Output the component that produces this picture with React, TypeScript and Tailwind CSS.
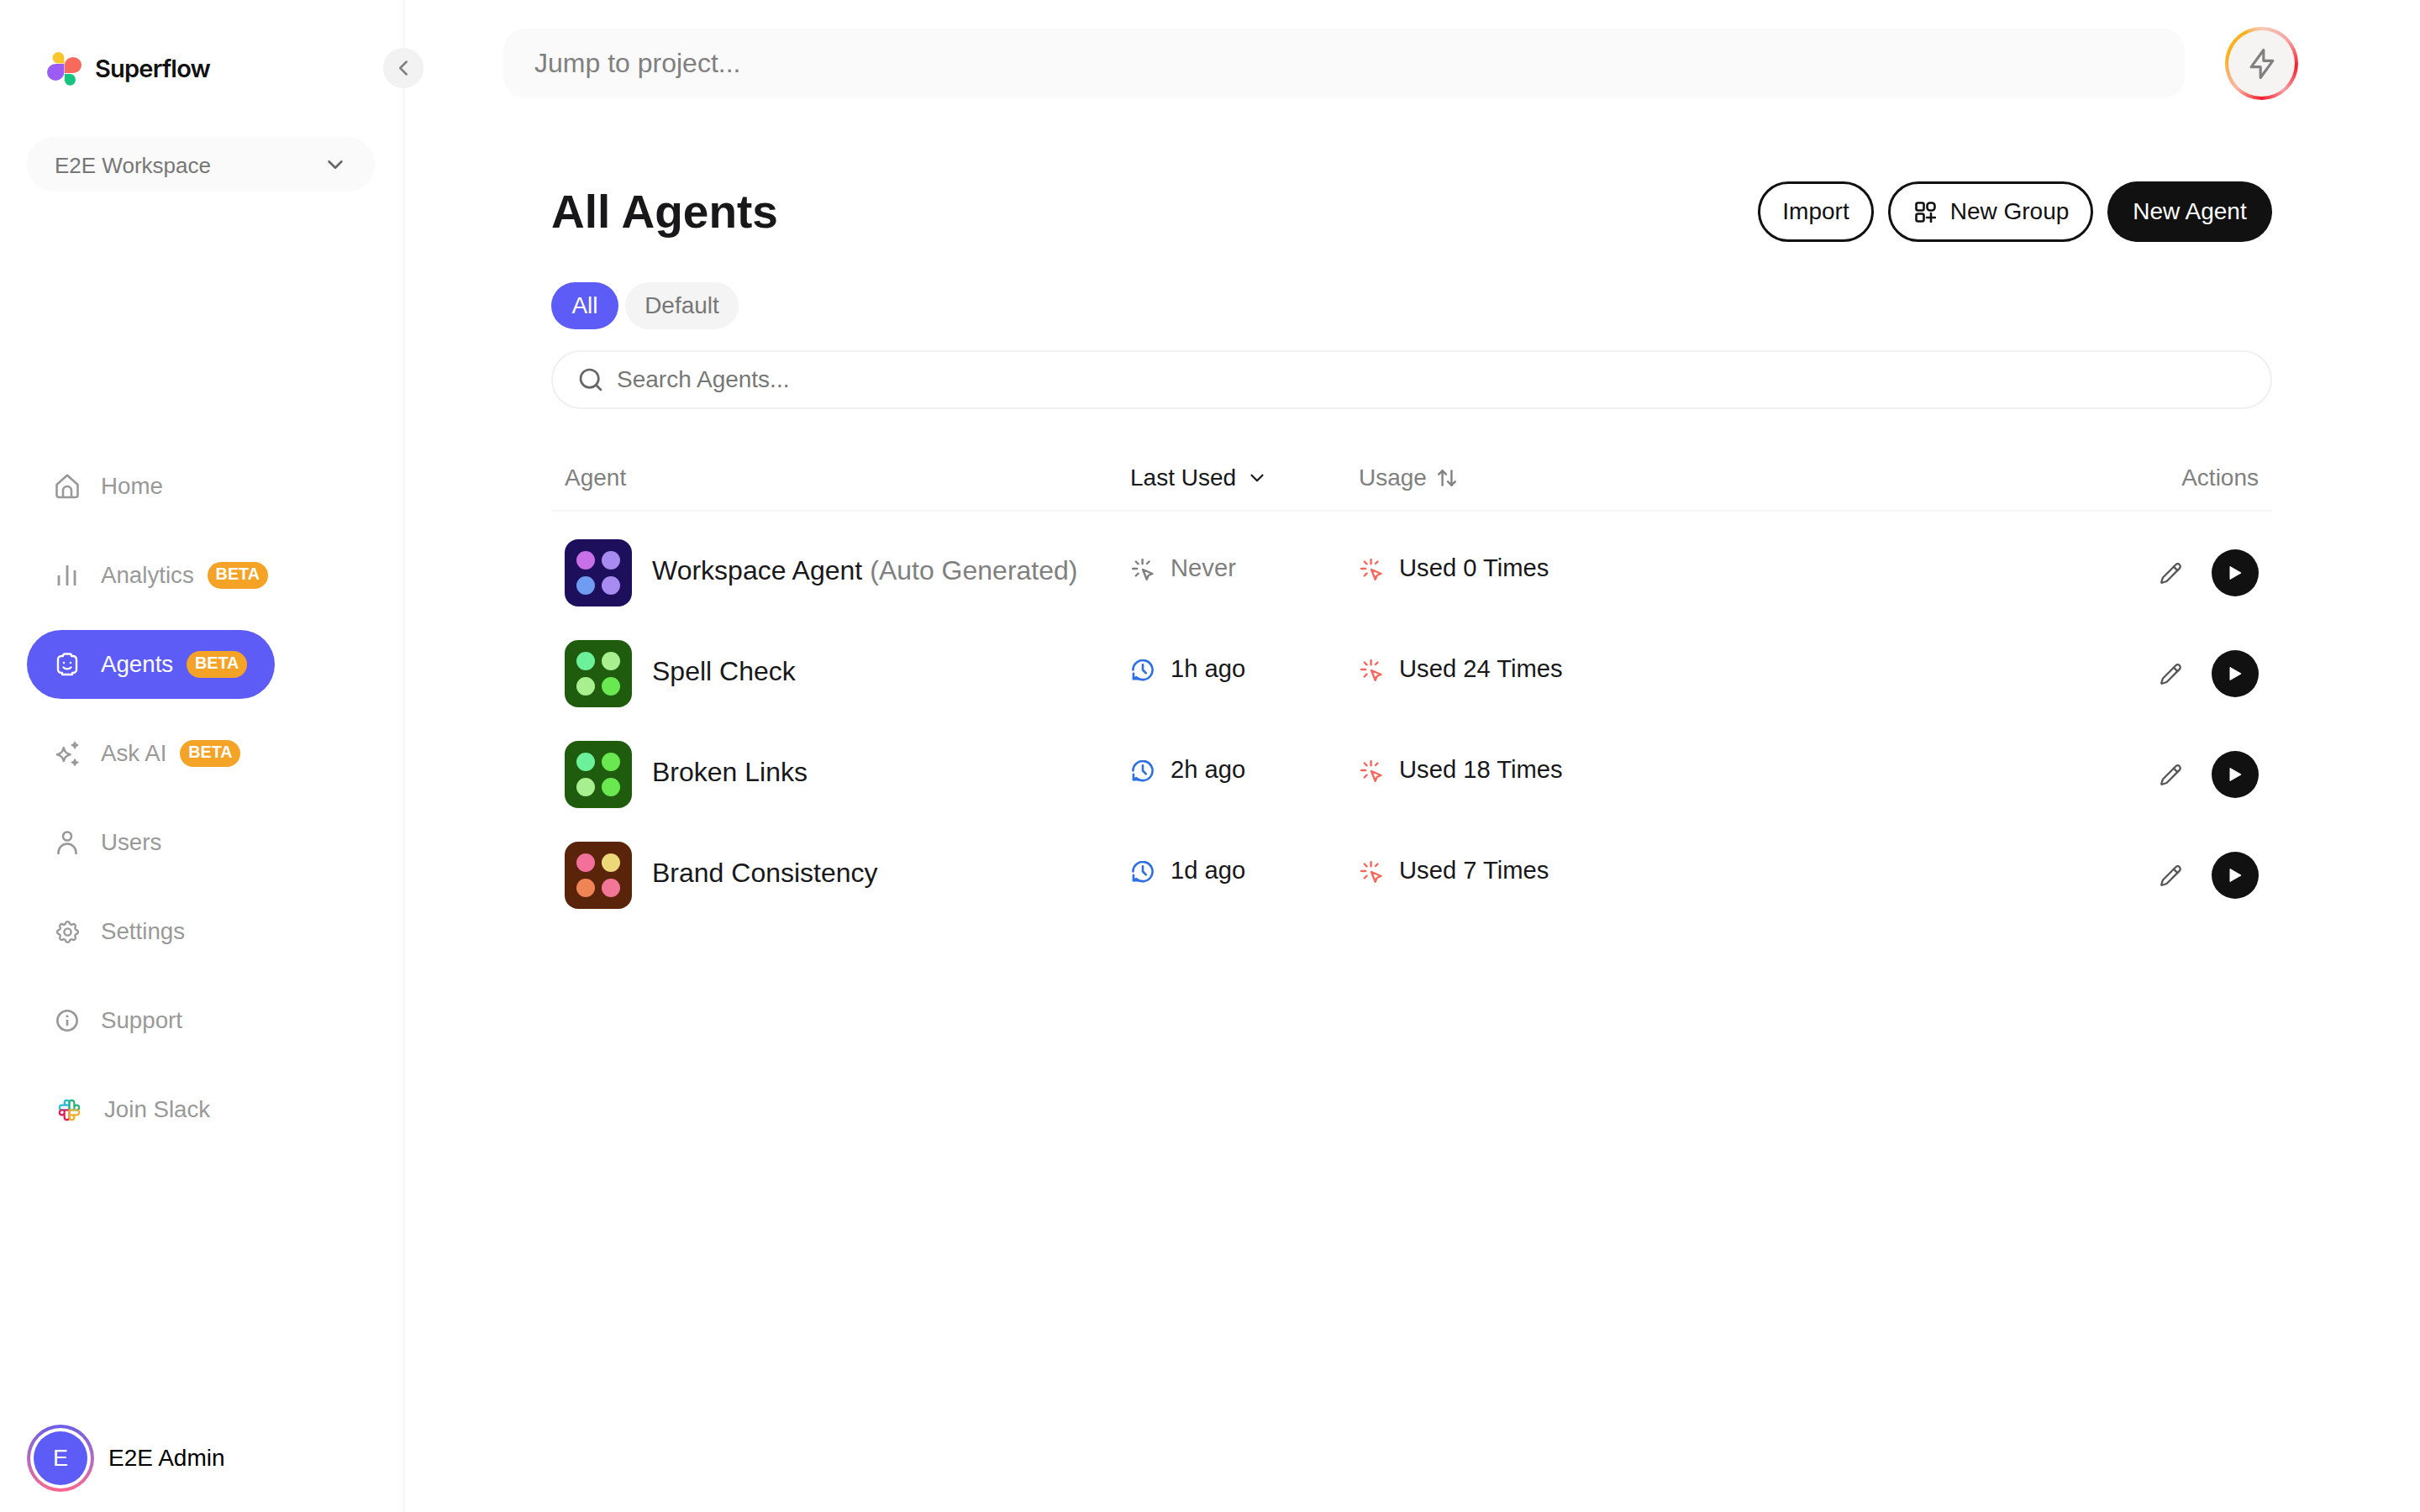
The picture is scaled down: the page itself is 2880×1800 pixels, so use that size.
import { ArrowUpDown, ChevronDown, ChevronLeft, Pencil, Search } from 'lucide-react';
import { TbSettings } from 'react-icons/tb';
import type { ReactNode } from 'react';

function Logo() {
  return (
    <svg width="41" height="40" viewBox="0 0 41 40" aria-hidden="true">
      <path d="M20.4 13.4H13.45A6.95 6.7 0 1 1 20.4 6.7Z" fill="#fbc52d" />
      <path d="M20.8 25V15.5A10.1 9.5 0 1 1 30.9 25Z" fill="#f96a5d" />
      <path d="M20.4 14V24A10.2 10 0 1 1 10.2 14Z" fill="#9b5cf6" />
      <path d="M20.8 26H27.4A6.6 6.85 0 1 1 20.8 32.85Z" fill="#16c47f" />
    </svg>
  );
}

function HomeIcon() {
  return (
    <svg width="28" height="30" viewBox="0 0 28 30" fill="none" stroke="currentColor" strokeWidth="2.6" strokeLinejoin="round" aria-hidden="true">
      <path d="M1.5 13 14 1.8 26.500 13v12.500a2.500 2.500 0 0 1-2.500 2.500H4a2.500 2.500 0 0 1-2.500-2.500Z" />
      <path d="M9 28v-8a5 5 0 0 1 10 0v8" />
    </svg>
  );
}

function BarsIcon() {
  return (
    <svg width="28" height="26" viewBox="0 0 28 26" fill="none" stroke="currentColor" strokeWidth="2.8" aria-hidden="true">
      <path d="M4 13v12M14 1v24M23 7v18" />
    </svg>
  );
}

function BotIcon() {
  return (
    <svg width="28" height="28" viewBox="0 0 28 28" fill="none" stroke="currentColor" strokeWidth="2.4" strokeLinecap="round" strokeLinejoin="round" aria-hidden="true">
      <path d="M9 4V3.500A2 2 0 0 1 11 1.500h6a2 2 0 0 1 2 2V4h1.500A4 4 0 0 1 25 8v12a4 4 0 0 1-4 4h-1v2h-12v-2H7a4 4 0 0 1-4-4V8a4 4 0 0 1 4-4Z" />
      <path d="M9.500 17.500c2.500 2.500 6.500 2.500 9 0" />
      <circle cx="10" cy="12" r="1.200" fill="currentColor" stroke="none" />
      <circle cx="18" cy="12" r="1.200" fill="currentColor" stroke="none" />
    </svg>
  );
}

function SparkIcon() {
  return (
    <svg width="28" height="30" viewBox="3 0 23 25" aria-hidden="true">
      <path d="M11 7c1 4 2.500 5.500 6.500 6.500-4 1-5.500 2.500-6.500 6.500-1-4-2.500-5.500-6.500-6.500C8.500 12.500 10 11 11 7Z" fill="none" stroke="currentColor" strokeWidth="2.200" strokeLinejoin="round" />
      <path d="M22 1c.5 2 1.300 2.800 3.300 3.300-2 .5-2.800 1.300-3.300 3.300-.5-2-1.300-2.800-3.300-3.300 2-.5 2.800-1.300 3.300-3.300Z" fill="currentColor" stroke="currentColor" strokeWidth="1" strokeLinejoin="round" />
      <path d="M22 18c.5 2 1.300 2.800 3.300 3.300-2 .5-2.800 1.300-3.300 3.300-.5-2-1.300-2.800-3.300-3.300 2-.5 2.800-1.300 3.300-3.300Z" fill="currentColor" stroke="currentColor" strokeWidth="1" strokeLinejoin="round" />
    </svg>
  );
}

function PersonIcon() {
  return (
    <svg width="28" height="28" viewBox="0 0 28 28" fill="none" stroke="currentColor" strokeWidth="2.600" aria-hidden="true">
      <circle cx="14" cy="6.500" r="5" />
      <path d="M3.500 28v-2a10.500 10.500 0 0 1 21 0v2" />
    </svg>
  );
}

function InfoIcon() {
  return (
    <svg width="28" height="28" viewBox="0 0 28 28" fill="none" stroke="currentColor" strokeWidth="2.600" aria-hidden="true">
      <circle cx="14" cy="14" r="11.700" />
      <path d="M14 13v7" />
      <circle cx="14" cy="8.800" r="1.600" fill="currentColor" stroke="none" />
    </svg>
  );
}

function SlackIcon() {
  return (
    <svg width="35" height="35" viewBox="0 0 24 24" fill="none" strokeWidth="1.500" strokeLinecap="round" strokeLinejoin="round" className="shrink-0" aria-hidden="true">
      <path d="M12 12h-6a2 2 0 0 1 0 -4h6m-2 0a2 2 0 1 1 2 -2v6" stroke="#2fb9d6" />
      <path d="M12 12v-6a2 2 0 0 1 4 0v6m0 -2a2 2 0 1 1 2 2h-6" stroke="#2bb57a" />
      <path d="M12 12v6a2 2 0 0 1 -4 0v-6m0 2a2 2 0 1 1 -2 -2h6" stroke="#dd1f5a" />
      <path d="M12 12h6a2 2 0 0 1 0 4h-6m2 0a2 2 0 1 1 -2 2v-6" stroke="#efb02e" />
    </svg>
  );
}

function GroupIcon() {
  return (
    <svg width="25" height="25" viewBox="0 0 25 25" fill="none" stroke="#111" strokeWidth="2.600" strokeLinecap="round" aria-hidden="true">
      <rect x="1.500" y="1.500" width="9" height="9" rx="2" />
      <rect x="14.500" y="1.500" width="9" height="9" rx="3.500" />
      <rect x="1.500" y="14.500" width="9" height="9" rx="2" />
      <path d="M19 14v10M14 19h10" />
    </svg>
  );
}

function BoltIcon() {
  return (
    <svg width="44" height="44" viewBox="0 0 24 24" fill="none" stroke="#808080" strokeWidth="1.700" strokeLinecap="round" strokeLinejoin="round" aria-hidden="true">
      <path d="M13 3v7h6l-8 11v-7h-6l8 -11" />
    </svg>
  );
}

function ClickIcon({ color }: { color: string }) {
  return (
    <svg width="26" height="26" viewBox="0 0 26 26" fill="none" stroke={color} strokeWidth="2.400" strokeLinecap="round" strokeLinejoin="round" aria-hidden="true">
      <path d="M12.600 1v5.200M4.800 3.500l2.800 2.800M20.500 3.500l-2.500 2.500M1 12h5.200M4.800 20.500l2.800-2.800" />
      <path d="M13 13l11.500 5-4.800 2-2 4.800Z" />
    </svg>
  );
}

function HistoryIcon() {
  return (
    <svg width="26" height="26" viewBox="0 0 27 27" fill="none" stroke="#2f6fe4" strokeWidth="2.700" strokeLinecap="round" strokeLinejoin="round" aria-hidden="true">
      <path d="M1.500 13a12 12 0 1 1 4 9L2 24" />
      <path d="M2 17.500V24h6.500" />
      <path d="M13.500 6.500V13l4 4" />
    </svg>
  );
}

type NavProps = {
  icon: ReactNode;
  label: string;
  beta?: boolean;
  active?: boolean;
  slack?: boolean;
};

function NavItem({ icon, label, beta, active, slack }: NavProps) {
  return (
    <div
      className={`flex h-[82px] w-fit items-center rounded-full pr-[33px] ${slack ? 'pl-[36px]' : 'pl-[34px]'} ${
        active ? 'bg-[#5e5cf6] text-white' : 'text-[#999999]'
      }`}
    >
      <span className="flex w-[28px] justify-center">{icon}</span>
      <span className={`text-[27.7px] leading-none ${slack ? 'ml-[28px]' : 'ml-[26px]'}`}>{label}</span>
      {beta && (
        <span className="ml-[16px] flex h-[32px] w-[72px] items-center justify-center rounded-full bg-[#f5a327] pb-[2px] text-[19.8px] leading-none font-bold text-white">
          BETA
        </span>
      )}
    </div>
  );
}

type Agent = {
  name: string;
  note?: string;
  bg: string;
  dots: string[];
  last: string;
  uses: number;
};

const agents: Agent[] = [
  { name: 'Workspace Agent', note: '(Auto Generated)', bg: 'bg-[#1e0f5c]', dots: ['bg-[#c96fe8]', 'bg-[#a78bf0]', 'bg-[#6f9bf0]', 'bg-[#a78bf0]'], last: 'Never', uses: 0 },
  { name: 'Spell Check', bg: 'bg-[#1f5c0e]', dots: ['bg-[#6df09a]', 'bg-[#a8f08f]', 'bg-[#a8f08f]', 'bg-[#6ae850]'], last: '1h ago', uses: 24 },
  { name: 'Broken Links', bg: 'bg-[#1f5c0e]', dots: ['bg-[#6df09a]', 'bg-[#6ae850]', 'bg-[#a8f08f]', 'bg-[#6ae850]'], last: '2h ago', uses: 18 },
  { name: 'Brand Consistency', bg: 'bg-[#5a240a]', dots: ['bg-[#f2709a]', 'bg-[#ecd878]', 'bg-[#ef8455]', 'bg-[#f27698]'], last: '1d ago', uses: 7 },
];

function AgentRow({ agent }: { agent: Agent }) {
  const never = agent.last === 'Never';
  return (
    <div className="grid h-[120px] grid-cols-[673px_272px_1fr_auto] items-center pr-[16px] pl-[16px]">
      <div className="flex items-center">
        <div className={`grid h-[80px] w-[80px] grid-cols-2 gap-[8px] rounded-[16px] p-[14px] ${agent.bg}`}>
          {agent.dots.map((dot, i) => (
            <span key={i} className={`h-[22px] w-[22px] rounded-full ${dot}`} />
          ))}
        </div>
        <div className="ml-[24px] pb-[6px] text-[32px] leading-none text-[#18181b]">
          {agent.name}
          {agent.note && <span className="ml-[9px] text-[#808080]">{agent.note}</span>}
        </div>
      </div>
      <div className="ml-[2px] flex items-center gap-[20px] pb-[8px]">
        {never ? <ClickIcon color="#808080" /> : <HistoryIcon />}
        <span className={`mb-[3px] text-[29.2px] leading-none ${never ? 'text-[#808080]' : 'text-[#18181b]'}`}>{agent.last}</span>
      </div>
      <div className="ml-[2px] flex items-center gap-[20px] pb-[8px]">
        <ClickIcon color="#f4675c" />
        <span className="mb-[3px] text-[29.2px] leading-none text-[#18181b]">Used {agent.uses} Times</span>
      </div>
      <div className="flex items-center gap-[35px]">
        <Pencil size={27} strokeWidth={2} className="text-[#555555]" />
        <div className="flex h-[56px] w-[56px] items-center justify-center rounded-full bg-[#111111]">
          <svg width="18" height="18" viewBox="0 0 18 18" aria-hidden="true">
            <path d="M3 1.500 16 9 3 16.500Z" fill="white" stroke="white" strokeWidth="1" strokeLinejoin="round" />
          </svg>
        </div>
      </div>
    </div>
  );
}

export default function App() {
  return (
    <div className="flex h-screen w-full overflow-hidden bg-white font-['Liberation_Sans',Arial,sans-serif]">
      <aside className="relative flex w-[482px] shrink-0 flex-col border-r-[3px] border-[#f8f8f8] px-[32px] pt-[62px] pb-[24px]">
        <div className="flex h-[40px] items-center pl-[24px]">
          <Logo />
          <span className="ml-[16px] pb-[2px] font-['Inter',sans-serif] text-[29px] leading-none font-semibold tracking-[-0.8px] text-[#111111]">
            Superflow
          </span>
        </div>
        <button className="absolute top-[57px] left-[456px] flex h-[48px] w-[48px] items-center justify-center rounded-full bg-[#f2f2f2]">
          <ChevronLeft size={30} strokeWidth={2} className="text-[#808080]" />
        </button>
        <div className="mt-[61px] flex h-[65px] w-[414px] items-center justify-between rounded-full bg-[#fafafa] pr-[32px] pl-[33px]">
          <span className="pt-[2px] text-[26px] leading-none text-[#777777]">E2E Workspace</span>
          <ChevronDown size={30} strokeWidth={2} className="text-[#666666]" />
        </div>
        <nav className="mt-[310px] flex flex-col gap-[24px]">
          <NavItem icon={<HomeIcon />} label="Home" />
          <NavItem icon={<BarsIcon />} label="Analytics" beta />
          <NavItem icon={<BotIcon />} label="Agents" beta active />
          <NavItem icon={<SparkIcon />} label="Ask AI" beta />
          <NavItem icon={<PersonIcon />} label="Users" />
          <NavItem icon={<TbSettings size={33} strokeWidth={1.7} className="shrink-0" />} label="Settings" />
          <NavItem icon={<InfoIcon />} label="Support" />
          <NavItem icon={<SlackIcon />} label="Join Slack" slack />
        </nav>
        <div className="mt-auto flex items-center">
          <div className="h-[80px] w-[80px] rounded-full bg-gradient-to-b from-[#6d5ce7] to-[#f9668f] p-[4px]">
            <div className="h-full w-full rounded-full bg-white p-[4px]">
              <div className="flex h-full w-full items-center justify-center rounded-full bg-[#5e5cf6] text-[27px] leading-none text-white">
                E
              </div>
            </div>
          </div>
          <span className="ml-[17px] text-[28px] leading-none text-black">E2E Admin</span>
        </div>
      </aside>

      <main className="flex min-w-0 flex-1 flex-col pt-[34px] pr-[145px] pl-[117px]">
        <div className="flex h-[83px] items-center gap-[48px]">
          <div className="flex h-full flex-1 items-center rounded-[26px] bg-[#fafafa] pb-[2px] pl-[37px] text-[32px] leading-none text-[#808080]">
            Jump to project...
          </div>
          <div className="flex h-[87px] w-[87px] items-center justify-center rounded-full bg-[conic-gradient(from_0deg,#f7c9b8_0deg,#f8a0a0_50deg,#f51d2d_95deg,#f8a0a0_140deg,#f51d2d_180deg,#f8b8a0_225deg,#f9b080_245deg,#fbb01c_280deg,#fbb01c_330deg,#f7c9b8_360deg)] p-[4px]">
            <div className="flex h-full w-full items-center justify-center rounded-full bg-[#f6f3f3]">
              <BoltIcon />
            </div>
          </div>
        </div>

        <div className="mr-[31px] ml-[57px] flex flex-col">
          <div className="mt-[99px] flex h-[72px] items-center justify-between">
            <h1 className="text-[55px] leading-none font-bold text-[#18181b]">All Agents</h1>
            <div className="flex items-center gap-[17px]">
              <button className="h-[72px] w-[138px] rounded-full border-[3px] border-[#111111] text-[28px] leading-none text-[#111111]">
                Import
              </button>
              <button className="flex h-[72px] w-[244px] items-center justify-center gap-[17px] rounded-full border-[3px] border-[#111111] pl-[3px] text-[28px] leading-none text-[#111111]">
                <GroupIcon />
                New Group
              </button>
              <button className="h-[72px] w-[196px] rounded-full bg-[#111111] text-[28px] leading-none text-white">New Agent</button>
            </div>
          </div>

          <div className="mt-[48px] flex h-[56px] gap-[8px]">
            <div className="flex w-[80px] items-center justify-center rounded-full bg-[#5e5cf6] text-[28px] leading-none text-white">All</div>
            <div className="flex w-[135px] items-center justify-center rounded-full bg-[#f4f4f4] text-[28px] leading-none text-[#777777]">Default</div>
          </div>

          <div className="mt-[25px] flex h-[70px] items-center gap-[15px] rounded-full border-[2px] border-[#f0f0f0] pl-[29px]">
            <Search size={32} strokeWidth={2} className="text-[#666666]" />
            <span className="text-[28px] leading-none text-[#777777]">Search Agents...</span>
          </div>

          <div className="mt-[41px] grid h-[81px] grid-cols-[673px_272px_1fr_auto] items-center border-b-[2px] border-[#f4f4f4] pr-[16px] pl-[16px] text-[28px] leading-none text-[#808080]">
            <span className="pt-[3px]">Agent</span>
            <span className="flex items-center gap-[12px] pt-[3px] text-[#18181b]">
              Last Used
              <ChevronDown size={26} strokeWidth={2} />
            </span>
            <span className="flex items-center gap-[11px] pt-[3px]">
              Usage
              <ArrowUpDown size={26} strokeWidth={2.2} />
            </span>
            <span className="pt-[3px]">Actions</span>
          </div>

          <div className="mt-[13px] flex flex-col">
            {agents.map((agent) => (
              <AgentRow key={agent.name} agent={agent} />
            ))}
          </div>
        </div>
      </main>
    </div>
  );
}
